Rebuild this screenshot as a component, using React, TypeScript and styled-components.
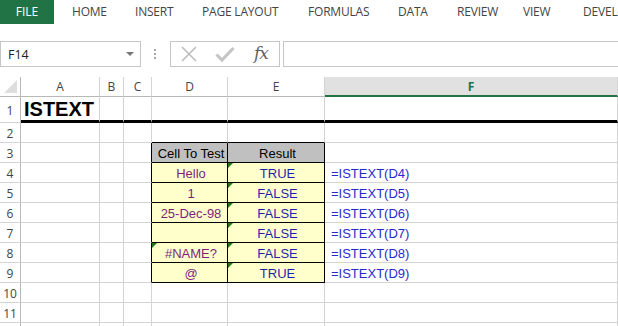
import React from "react";
import styled, { createGlobalStyle } from "styled-components";

const GlobalStyle = createGlobalStyle`
  html, body {
    margin: 0;
    padding: 0;
    background: #fff;
    overflow: hidden;
  }
  body {
    font-family: "Open Sans", "Liberation Sans", sans-serif;
  }
`;

const GRID = "#d4d4d4";
const HEAD_LINE = "#b8b8b8";
const BLACK = "#000";

const Window = styled.div`
  width: 618px;
  height: 326px;
  overflow: hidden;
  background: #fff;
`;

// Ribbon tabs
const TabBar = styled.div`
  display: flex;
  height: 24px;
  overflow: hidden;
`;

const FileTab = styled.div`
  flex: 0 0 54px;
  margin-right: 18px;
  background: #217346;
  color: #fff;
  font-size: 12px;
  line-height: 24px;
  text-align: center;
`;

const Tab = styled.div<{ $w?: number }>`
  flex: ${(p) => (p.$w ? `0 0 ${p.$w}px` : "1 0 auto")};
  color: #444;
  font-size: 12px;
  line-height: 24px;
  letter-spacing: -0.2px;
  white-space: nowrap;
`;

// Formula bar
const FormulaBar = styled.div`
  display: flex;
  align-items: center;
  height: 26px;
  margin-top: 17px;
`;

const NameBox = styled.div`
  box-sizing: border-box;
  width: 141px;
  height: 26px;
  border: 1px solid #c6c6c6;
  display: flex;
  align-items: center;
  justify-content: space-between;
  padding: 0 6px 0 7px;
  font-size: 12.5px;
  color: #222;
`;

const DropArrow = styled.span`
  width: 0;
  height: 0;
  border-left: 4px solid transparent;
  border-right: 4px solid transparent;
  border-top: 4px solid #777;
`;

const Grip = styled.div`
  display: flex;
  flex-direction: column;
  gap: 2px;
  margin: 0 14px 0 13px;
  span {
    width: 2px;
    height: 2px;
    background: #a8a8a8;
  }
`;

const ButtonBox = styled.div`
  box-sizing: border-box;
  width: 110px;
  height: 26px;
  border: 1px solid #c6c6c6;
  display: flex;
  align-items: center;
`;

const IconSlot = styled.div`
  flex: 0 0 36px;
  height: 24px;
  display: flex;
  align-items: center;
  justify-content: center;
`;

const Fx = styled.span`
  font-family: "DejaVu Serif", "Liberation Serif", serif;
  font-style: italic;
  font-size: 17px;
  color: #5f5f5f;
  letter-spacing: -1px;
  margin-top: -2px;
`;

const FormulaInput = styled.div`
  box-sizing: border-box;
  flex: 1;
  height: 26px;
  margin: 0 -2px 0 3px;
  border: 1px solid #c6c6c6;
`;

// Sheet
const Sheet = styled.div`
  display: grid;
  grid-template-columns: 21px 79px 24px 28px 76px 97px 293px;
  grid-template-rows: 20px 26px repeat(11, 20px);
  margin-top: 10px;
`;

const Corner = styled.div`
  position: relative;
  box-sizing: border-box;
  border-right: 1px solid ${HEAD_LINE};
  border-bottom: 1px solid ${HEAD_LINE};
  svg {
    position: absolute;
    left: 4px;
    top: 3px;
  }
`;

const ColHead = styled.div<{ $active?: boolean }>`
  box-sizing: border-box;
  display: flex;
  align-items: center;
  justify-content: center;
  border-right: 1px solid ${GRID};
  border-bottom: ${(p) => (p.$active ? "2px solid #217346" : `1px solid ${HEAD_LINE}`)};
  background: ${(p) => (p.$active ? "#e1e1e1" : "#fff")};
  color: ${(p) => (p.$active ? "#217346" : "#444")};
  font-weight: ${(p) => (p.$active ? 700 : 400)};
  font-size: 12px;
`;

const RowHead = styled.div`
  box-sizing: border-box;
  display: flex;
  align-items: center;
  justify-content: center;
  padding-top: 2px;
  border-right: 1px solid ${HEAD_LINE};
  border-bottom: 1px solid ${GRID};
  color: #444;
  font-size: 12px;
`;

const Cell = styled.div<{
  $rb: string;
  $bb: string;
  $bw: number;
  $bg: string;
  $color: string;
  $align: string;
}>`
  position: relative;
  box-sizing: border-box;
  display: flex;
  align-items: center;
  justify-content: ${(p) => p.$align};
  padding: 1px 3px 0 6px;
  border-right: 1px solid ${(p) => p.$rb};
  border-bottom: ${(p) => p.$bw}px solid ${(p) => p.$bb};
  background: ${(p) => p.$bg};
  color: ${(p) => p.$color};
  font-family: "Liberation Sans", Arial, sans-serif;
  font-size: 13px;
  white-space: nowrap;
`;

const Title = styled.span`
  align-self: flex-end;
  margin-left: -3px;
  font-size: 20px;
  font-weight: 700;
  line-height: 22px;
  color: #000;
`;

const ErrorMark = styled.span`
  position: absolute;
  top: 0;
  left: 0;
  width: 0;
  height: 0;
  border-top: 5px solid #1e7b1e;
  border-right: 5px solid transparent;
`;

type CellData = {
  text?: string;
  kind?: "title" | "head" | "input" | "result" | "formula";
  mark?: boolean;
};

const COLS = ["A", "B", "C", "D", "E", "F"];

const inputs = ["Hello", "1", "25-Dec-98", "", "#NAME?", "@"];
const results = ["TRUE", "FALSE", "FALSE", "FALSE", "FALSE", "TRUE"];

const rows: Record<string, CellData>[] = Array.from({ length: 12 }, () => ({}));
rows[0].A = { text: "ISTEXT", kind: "title" };
rows[2].D = { text: "Cell To Test", kind: "head" };
rows[2].E = { text: "Result", kind: "head" };
inputs.forEach((v, i) => {
  const r = i + 3;
  rows[r].D = { text: v, kind: "input", mark: v === "#NAME?" };
  rows[r].E = { text: results[i], kind: "result", mark: true };
  rows[r].F = { text: `=ISTEXT(D${r + 1})`, kind: "formula" };
});

const inTable = (r: number, c: string) => r >= 2 && r <= 8 && (c === "D" || c === "E");

function cellStyle(r: number, c: string, d?: CellData) {
  let rb = GRID;
  let bb = GRID;
  let bw = 1;
  let bg = "#fff";
  let color = "#000";
  let align = "flex-start";

  if (r === 0) {
    bb = BLACK;
    bw = 3;
  }
  if (r === 1 && (c === "D" || c === "E")) bb = BLACK;
  if (r >= 2 && r <= 8 && c === "C") rb = BLACK;
  if (inTable(r, c)) {
    rb = BLACK;
    bb = BLACK;
    bg = r === 2 ? "#c0c0c0" : "#ffffcc";
    align = "center";
  }
  if (d?.kind === "input") color = "#7e1f7e";
  if (d?.kind === "result") color = "#1f1fb0";
  if (d?.kind === "formula") color = "#2a2acc";
  return { rb, bb, bw, bg, color, align };
}

function CrossIcon() {
  return (
    <svg width="18" height="16" viewBox="0 0 18 16">
      <path d="M2 1 L16 15 M16 1 L2 15" stroke="#bdbdbd" strokeWidth="1.6" fill="none" />
    </svg>
  );
}

function CheckIcon() {
  return (
    <svg width="20" height="17" viewBox="0 0 20 17">
      <path d="M1.5 8.5 L7 14 L18.5 2" stroke="#c4c4c4" strokeWidth="3" fill="none" />
    </svg>
  );
}

export default function App() {
  return (
    <Window>
      <GlobalStyle />
      <TabBar>
        <FileTab>FILE</FileTab>
        <Tab $w={63}>HOME</Tab>
        <Tab $w={67}>INSERT</Tab>
        <Tab $w={106}>PAGE LAYOUT</Tab>
        <Tab $w={90}>FORMULAS</Tab>
        <Tab $w={59}>DATA</Tab>
        <Tab $w={66}>REVIEW</Tab>
        <Tab $w={60}>VIEW</Tab>
        <Tab>DEVELOPER</Tab>
      </TabBar>

      <FormulaBar>
        <NameBox>
          <span>F14</span>
          <DropArrow />
        </NameBox>
        <Grip>
          <span />
          <span />
          <span />
        </Grip>
        <ButtonBox>
          <IconSlot>
            <CrossIcon />
          </IconSlot>
          <IconSlot>
            <CheckIcon />
          </IconSlot>
          <IconSlot>
            <Fx>fx</Fx>
          </IconSlot>
        </ButtonBox>
        <FormulaInput />
      </FormulaBar>

      <Sheet>
        <Corner>
          <svg width="14" height="14" viewBox="0 0 14 14">
            <polygon points="13,0 13,13 0,13" fill="#dedede" />
          </svg>
        </Corner>
        {COLS.map((c) => (
          <ColHead key={c} $active={c === "F"}>
            {c}
          </ColHead>
        ))}
        {rows.map((row, r) => (
          <React.Fragment key={r}>
            <RowHead>{r + 1}</RowHead>
            {COLS.map((c) => {
              const d = row[c];
              const s = cellStyle(r, c, d);
              return (
                <Cell
                  key={c}
                  $rb={s.rb}
                  $bb={s.bb}
                  $bw={s.bw}
                  $bg={s.bg}
                  $color={s.color}
                  $align={s.align}
                >
                  {d?.mark && <ErrorMark />}
                  {d?.kind === "title" ? <Title>{d.text}</Title> : d?.text}
                </Cell>
              );
            })}
          </React.Fragment>
        ))}
      </Sheet>
    </Window>
  );
}
